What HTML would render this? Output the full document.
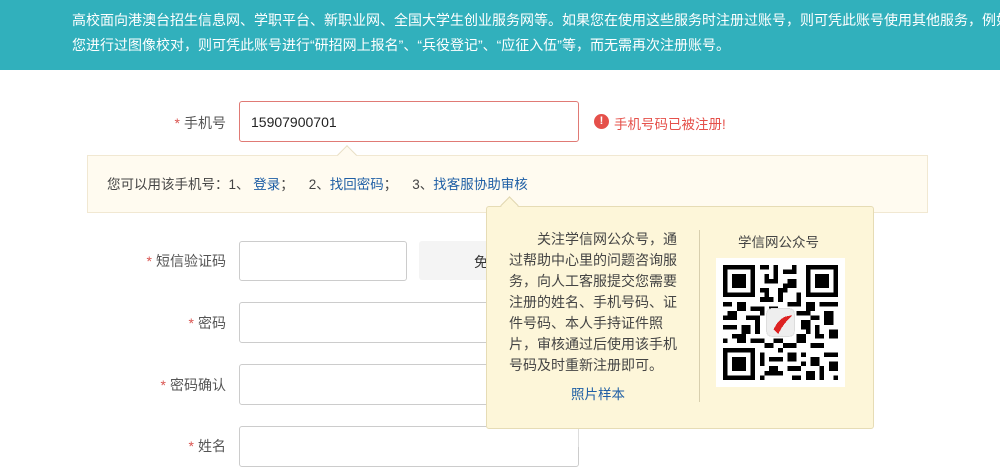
<!DOCTYPE html>
<html><head><meta charset="utf-8"><style>
*{margin:0;padding:0;box-sizing:border-box}
body{width:1000px;height:447px;overflow:hidden;background:#fff;font-family:"Liberation Sans","Noto Sans CJK SC",sans-serif;position:relative;color:#333}
.hd{position:absolute;left:0;top:0;width:1000px;height:70px;background:#31b0bc;color:#fff;font-size:14px;overflow:hidden}
.hd div{position:absolute;left:72px;white-space:nowrap}
.lab{position:absolute;width:140px;left:86px;text-align:right;font-size:14px;color:#555}
.lab b{color:#d9534f;font-weight:normal;margin-right:4px}
.inp{position:absolute;border:1px solid #ccc;border-radius:3px;background:#fff}
.a{color:#1f5fa5}
</style></head><body>
<div class="hd"><div style="top:10px">高校面向港澳台招生信息网、学职平台、新职业网、全国大学生创业服务网等。如果您在使用这些服务时注册过账号，则可凭此账号使用其他服务，例如</div><div style="top:35px">您进行过图像校对，则可凭此账号进行“研招网上报名”、“兵役登记”、“应征入伍”等，而无需再次注册账号。</div></div>

<div class="lab" style="top:113px"><b>*</b>手机号</div>
<div class="inp" style="left:239px;top:101px;width:340px;height:41px;border-color:#e07a75;font-size:14px;padding:12px 0 0 11px;color:#222">15907900701</div>
<div style="position:absolute;left:594px;top:114px;width:15px;height:15px;border-radius:50%;background:#e5504a;color:#fff;font-size:11px;font-weight:bold;text-align:center;line-height:15px">!</div>
<div style="position:absolute;left:614px;top:113px;font-size:13.5px;color:#e5504a">手机号码已被注册!</div>

<div style="position:absolute;left:87px;top:155px;width:841px;height:58px;background:#fffbf0;border:1px solid #f1e8d2"></div>
<div style="position:absolute;left:340px;top:148px;width:14px;height:14px;background:#fffbf0;border-left:1px solid #e8dfc5;border-top:1px solid #e8dfc5;transform:rotate(45deg)"></div>
<div style="position:absolute;left:107px;top:173px;font-size:13.5px;color:#444;white-space:nowrap">您可以用该手机号：1、 <span class="a">登录</span>；&nbsp;&nbsp;&nbsp; 2、<span class="a">找回密码</span>；&nbsp;&nbsp;&nbsp; 3、<span class="a">找客服协助审核</span></div>

<div class="lab" style="top:251px"><b>*</b>短信验证码</div>
<div class="inp" style="left:239px;top:241px;width:168px;height:40px"></div>
<div style="position:absolute;left:419px;top:241px;width:100px;height:39px;background:#f4f4f4;border-radius:3px;font-size:14px;padding:11px 0 0 55px">免</div>
<div class="lab" style="top:313px"><b>*</b>密码</div>
<div class="inp" style="left:239px;top:302px;width:340px;height:41px"></div>
<div class="lab" style="top:375px"><b>*</b>密码确认</div>
<div class="inp" style="left:239px;top:364px;width:340px;height:41px"></div>
<div class="lab" style="top:436px"><b>*</b>姓名</div>
<div class="inp" style="left:239px;top:426px;width:340px;height:41px"></div>

<div style="position:absolute;left:486px;top:206px;width:388px;height:223px;background:#fdf6d9;border:1px solid #e6dcb5;border-radius:3px"></div>
<div style="position:absolute;left:503px;top:199px;width:13px;height:13px;background:#fdf6d9;border-left:1px solid #e0d6b0;border-top:1px solid #e0d6b0;transform:rotate(45deg)"></div>
<div style="position:absolute;left:509px;top:229px;width:170px;font-size:14px;line-height:21px;color:#444;text-indent:28px">关注学信网公众号，通过帮助中心里的问题咨询服务，向人工客服提交您需要注册的姓名、手机号码、证件号码、本人手持证件照片，审核通过后使用该手机号码及时重新注册即可。</div>
<div style="position:absolute;left:571px;top:383px;font-size:13.5px" class="a">照片样本</div>
<div style="position:absolute;left:699px;top:230px;width:1px;height:172px;background:#d8cfae"></div>
<div style="position:absolute;left:738px;top:231px;font-size:13.5px;color:#444">学信网公众号</div>
<div style="position:absolute;left:716px;top:258px;width:129px;height:129px;background:#fff">
<svg width="115" height="115" viewBox="0 0 25 25" style="position:absolute;left:7px;top:7px" shape-rendering="crispEdges">
<g fill="#000">
<path d="M0 0h7v7h-7zM18 0h7v7h-7zM0 18h7v7h-7z"/>
</g>
<g fill="#fff"><path d="M1 1h5v5h-5zM19 1h5v5h-5zM1 19h5v5h-5z"/></g>
<g fill="#000"><path d="M2 2h3v3h-3zM20 2h3v3h-3zM2 20h3v3h-3z"/>
<path d="M8 0h2v1h-2zM11 0h1v3h-1zM13 1h3v1h-3zM9 2h1v2h-1zM14 3h2v2h-2zM8 5h2v1h-2zM12 5h1v3h-1zM16 6h1v2h-1zM8 7h3v1h-3zM10 3h2v1h-2zM15 0h1v1h-1zM13 4h1v2h-1zM9 6h1v1h-1z
M0 8h2v1h-2zM3 8h2v2h-2zM6 9h3v1h-3zM10 9h2v2h-2zM14 8h3v1h-3zM18 8h2v2h-2zM21 8h4v1h-4zM1 10h2v2h-2zM5 11h3v1h-3zM13 10h1v2h-1zM16 10h3v1h-3zM22 10h2v3h-2zM0 11h1v1h-1zM19 11h2v1h-2zM8 10h1v1h-1z
M0 13h3v1h-3zM4 13h2v2h-2zM7 12h1v3h-1zM17 12h2v2h-2zM20 13h1v3h-1zM2 15h3v1h-3zM6 16h3v1h-3zM16 15h2v2h-2zM23 14h2v2h-2zM0 16h1v1h-1zM9 17h2v1h-2zM13 17h3v1h-3zM19 17h3v1h-3zM21 15h1v1h-1zM18 14h1v1h-1zM11 16h2v1h-2zM3 16h2v1h-2z
M8 19h1v3h-1zM10 20h3v1h-3zM14 19h2v2h-2zM17 19h1v1h-1zM19 20h2v2h-2zM22 19h3v1h-3zM9 23h4v1h-4zM14 22h3v1h-3zM18 23h2v2h-2zM21 22h1v3h-1zM23 21h2v2h-2zM15 24h2v1h-2zM8 24h1v1h-1zM24 24h1v1h-1zM10 22h2v1h-2zM17 21h1v1h-1zM12 18h1v1h-1z"/></g>
<rect x="9.5" y="9.5" width="6" height="6" rx="1" fill="#eee" stroke="#ddd" stroke-width=".2"/>
<path d="M11 14c1-2 2-3 4-3c-1 1-2 2-3 4z" fill="#d22"/>
</svg></div>
<div style="position:absolute;left:578px;top:429px;width:1px;height:18px;background:#ddd"></div>
</body></html>
